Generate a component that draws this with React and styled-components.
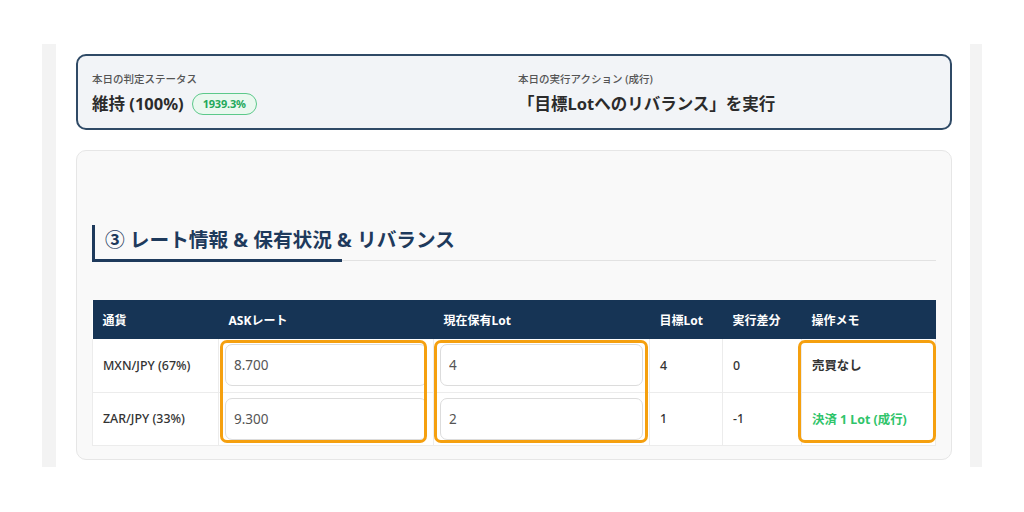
import React from "react";
import styled, { createGlobalStyle } from "styled-components";

const Global = createGlobalStyle`
  html, body { margin: 0; padding: 0; background: #ffffff; }
  body { font-family: "Noto Sans", "Noto Sans CJK JP", sans-serif; color: #333; }
  * { box-sizing: border-box; }
`;

const Page = styled.div`
  margin: 44px 0 0 42px;
  width: 940px;
  height: 423px;
  background: #f3f3f3;
  padding: 0 12px 0 14px;
`;

const Main = styled.main`
  height: 100%;
  background: #ffffff;
  padding: 10px 18px 0 20px;
  display: flex;
  flex-direction: column;
  gap: 20px;
`;

const StatusCard = styled.section`
  height: 76px;
  border: 2px solid #2f4a66;
  border-radius: 10px;
  background: #f2f4f7;
  padding: 15px 14px 0 14px;
  display: grid;
  grid-template-columns: 1fr 1fr;
  column-gap: 8px;
`;

const StatusCol = styled.div`
  display: flex;
  flex-direction: column;
`;

const Label = styled.div`
  font-size: 10.5px;
  line-height: 16px;
  color: #555;
  font-weight: 500;
  margin-bottom: 5px;
`;

const Value = styled.div`
  display: flex;
  align-items: center;
  gap: 8px;
  font-size: 16.5px;
  line-height: 24px;
  font-weight: 700;
  color: #2b2b2b;
`;

const Badge = styled.span`
  display: inline-flex;
  align-items: center;
  height: 22px;
  padding: 0 10px;
  border: 1px solid #5cc98a;
  border-radius: 11px;
  background: #eaf8ef;
  color: #23a85a;
  font-size: 11px;
  font-weight: 700;
  letter-spacing: -0.2px;
`;

const Card = styled.section`
  height: 310px;
  border: 1px solid #e6e6e6;
  border-radius: 10px;
  background: #f9f9f9;
  padding: 74px 15px 0 15px;
`;

const HeadingRow = styled.div`
  position: relative;
  border-bottom: 1px solid #e2e2e2;
  margin-bottom: 39px;
  &::after {
    content: "";
    position: absolute;
    left: 0;
    bottom: -2px;
    width: 250px;
    height: 3px;
    background: #1e3a5c;
  }
`;

const Heading = styled.h2`
  margin: 0;
  height: 35px;
  border-left: 3px solid #1e3a5c;
  padding-left: 10px;
  font-size: 19.7px;
  line-height: 30px;
  font-weight: 700;
  color: #1e3a5c;
`;

const TableWrap = styled.div`
  position: relative;
`;

const Table = styled.table`
  width: 100%;
  border-collapse: collapse;
  table-layout: fixed;
  background: #ffffff;
`;

const Th = styled.th`
  background: #163455;
  color: #ffffff;
  font-size: 12px;
  font-weight: 700;
  text-align: left;
  height: 39px;
  padding: 0 10px;
`;

const Td = styled.td`
  height: 53px;
  padding: 0 ${(p) => (p.$input ? "6px" : "10px")};
  border: 1px solid #ececec;
  border-top: none;
  font-size: 12.4px;
  font-weight: ${(p) => (p.$bold ? 700 : 500)};
  color: ${(p) => (p.$green ? "#2fc46a" : "#333")};
  white-space: nowrap;
`;

const Input = styled.input`
  display: block;
  width: 100%;
  height: 42px;
  border: 1px solid #dcdcdc;
  border-radius: 7px;
  background: #ffffff;
  padding: 0 8px;
  font-family: "Noto Sans", sans-serif;
  font-size: 13.5px;
  color: #555;
  outline: none;
`;

const Highlight = styled.div`
  position: absolute;
  top: 40px;
  height: 103px;
  border: 3px solid #f5a00f;
  border-radius: 7px;
  pointer-events: none;
`;

const rows = [
  { pair: "MXN/JPY (67%)", ask: "8.700", lot: "4", target: "4", diff: "0", memo: "売買なし", green: false },
  { pair: "ZAR/JPY (33%)", ask: "9.300", lot: "2", target: "1", diff: "-1", memo: "決済 1 Lot (成行)", green: true },
];

export default function App() {
  return (
    <>
      <Global />
      <Page>
        <Main>
          <StatusCard>
            <StatusCol>
              <Label>本日の判定ステータス</Label>
              <Value>
                維持 (100%)<Badge>1939.3%</Badge>
              </Value>
            </StatusCol>
            <StatusCol>
              <Label>本日の実行アクション (成行)</Label>
              <Value>「目標Lotへのリバランス」を実行</Value>
            </StatusCol>
          </StatusCard>
          <Card>
            <HeadingRow>
              <Heading>③ レート情報 &amp; 保有状況 &amp; リバランス</Heading>
            </HeadingRow>
            <TableWrap>
              <Table>
                <colgroup>
                  <col style={{ width: 126 }} />
                  <col style={{ width: 215 }} />
                  <col style={{ width: 216 }} />
                  <col style={{ width: 73 }} />
                  <col style={{ width: 79 }} />
                  <col />
                </colgroup>
                <thead>
                  <tr>
                    <Th>通貨</Th>
                    <Th>ASKレート</Th>
                    <Th>現在保有Lot</Th>
                    <Th>目標Lot</Th>
                    <Th>実行差分</Th>
                    <Th>操作メモ</Th>
                  </tr>
                </thead>
                <tbody>
                  {rows.map((r) => (
                    <tr key={r.pair}>
                      <Td>{r.pair}</Td>
                      <Td $input>
                        <Input defaultValue={r.ask} />
                      </Td>
                      <Td $input>
                        <Input defaultValue={r.lot} />
                      </Td>
                      <Td>{r.target}</Td>
                      <Td>{r.diff}</Td>
                      <Td $bold $green={r.green}>{r.memo}</Td>
                    </tr>
                  ))}
                </tbody>
              </Table>
              <Highlight style={{ left: 128, width: 207 }} />
              <Highlight style={{ left: 342, width: 214 }} />
              <Highlight style={{ left: 706, width: 138 }} />
            </TableWrap>
          </Card>
        </Main>
      </Page>
    </>
  );
}
